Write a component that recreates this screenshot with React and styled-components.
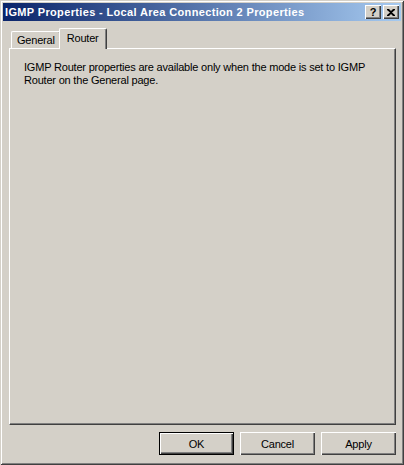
import React from "react";
import styled, { createGlobalStyle } from "styled-components";

const Global = createGlobalStyle`
  html, body { margin: 0; padding: 0; background: #D4D0C8; }
  * { box-sizing: border-box; }
`;

const font = `"Liberation Sans", Arial, sans-serif`;

const Window = styled.div`
  width: 404px;
  height: 465px;
  background: #D4D0C8;
  padding: 3px;
  display: flex;
  flex-direction: column;
  box-shadow: inset 1px 1px 0 #D4D0C8, inset -1px -1px 0 #404040,
    inset 2px 2px 0 #FFFFFF, inset -2px -2px 0 #808080;
  font-family: ${font};
  font-size: 11px;
  letter-spacing: -0.2px;
  color: #000;
`;

const TitleBar = styled.div`
  height: 18px;
  flex: none;
  display: flex;
  align-items: center;
  justify-content: space-between;
  padding: 0 2px 0 2px;
  background: linear-gradient(to right, #0A246A, #A6CAF0);
`;

const Title = styled.span`
  color: #fff;
  font-weight: bold;
  font-size: 11px;
  letter-spacing: 0.35px;
  white-space: nowrap;
`;

const TitleButtons = styled.div`
  display: flex;
  gap: 2px;
`;

const CapButton = styled.div`
  width: 16px;
  height: 14px;
  background: #D4D0C8;
  display: flex;
  align-items: center;
  justify-content: center;
  box-shadow: inset 1px 1px 0 #FFFFFF, inset -1px -1px 0 #404040,
    inset -2px -2px 0 #808080;
  font-weight: bold;
  font-size: 11px;
  letter-spacing: 0;
  line-height: 1;
  color: #000;
`;

const Body = styled.div`
  flex: 1;
  display: flex;
  flex-direction: column;
  padding: 7px 5px 7px 6px;
`;

const TabStrip = styled.div`
  display: flex;
  align-items: flex-end;
  height: 20px;
  padding-left: 2px;
  position: relative;
  z-index: 1;
`;

const Tab = styled.div`
  height: ${(p) => (p.$active ? "21px" : "17px")};
  margin: ${(p) => (p.$active ? "0 -2px -1px -2px" : "0")};
  padding: ${(p) => (p.$active ? "3px 7px 0 7px" : "2px 5px 0 5px")};
  background: #D4D0C8;
  border-top: 1px solid #FFFFFF;
  border-left: 1px solid #FFFFFF;
  border-right: 1px solid #404040;
  border-radius: 2px 2px 0 0;
  box-shadow: inset -1px 0 0 #808080;
  position: relative;
  z-index: ${(p) => (p.$active ? 2 : 1)};
  white-space: nowrap;
`;

const Panel = styled.div`
  flex: 1;
  border-top: 1px solid #FFFFFF;
  border-left: 1px solid #FFFFFF;
  border-right: 1px solid #404040;
  border-bottom: 1px solid #404040;
  box-shadow: inset -1px -1px 0 #808080;
  padding: 12px 14px;
  line-height: 13px;
`;

const Footer = styled.div`
  display: flex;
  justify-content: flex-end;
  gap: 6px;
  padding-top: 7px;
`;

const Button = styled.div`
  width: 75px;
  height: 23px;
  display: flex;
  align-items: center;
  justify-content: center;
  background: #D4D0C8;
  border: ${(p) => (p.$default ? "1px solid #000" : "none")};
  box-shadow: inset 1px 1px 0 #FFFFFF, inset -1px -1px 0 #404040,
    inset -2px -2px 0 #808080;
`;

export default function App() {
  return (
    <>
      <Global />
      <Window>
        <TitleBar>
          <Title>IGMP Properties - Local Area Connection 2 Properties</Title>
          <TitleButtons>
            <CapButton>?</CapButton>
            <CapButton>
              <svg width="8" height="7" viewBox="0 0 8 7">
                <path d="M0 0h2l2 2 2-2h2v1L5 3.5 8 6v1H6L4 5 2 7H0V6l3-2.5L0 1z" fill="#000" />
              </svg>
            </CapButton>
          </TitleButtons>
        </TitleBar>
        <Body>
          <TabStrip>
            <Tab>General</Tab>
            <Tab $active>Router</Tab>
          </TabStrip>
          <Panel>
            IGMP Router properties are available only when the mode is set to IGMP
            Router on the General page.
          </Panel>
          <Footer>
            <Button $default>OK</Button>
            <Button>Cancel</Button>
            <Button>Apply</Button>
          </Footer>
        </Body>
      </Window>
    </>
  );
}
